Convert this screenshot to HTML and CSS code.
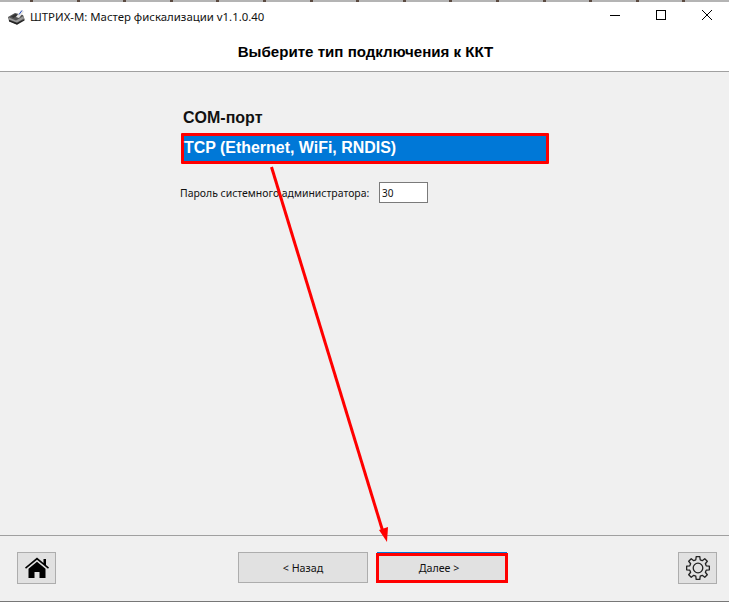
FILE: index.html
```html
<!DOCTYPE html>
<html lang="ru">
<head>
<meta charset="utf-8">
<title>ШТРИХ-М: Мастер фискализации</title>
<link rel="stylesheet" href="styles.css">
</head>
<body>
<div class="window">
  <div class="topstrip"></div>
  <header class="titlebar">
    <svg class="appicon" width="17" height="16" viewBox="0 0 17 16">
      <path d="M0 8 L7 4 L15 6 L16.500 10 L9 15.500 L1 12 Z" fill="#555"/>
      <path d="M1 8.500 L8 11.500 L15.500 7 L16 9.500 L9 13.500 L1 10.500 Z" fill="#9a9a9a"/>
      <path d="M1 11 L9 14 L16.500 10 L16.500 11.500 L9 15.800 L1 12.500 Z" fill="#222"/>
      <path d="M3 7.500 L7.500 5 L10 6 L5.500 9 Z" fill="#333"/>
      <path d="M8 8 L13 1 L16 2.500 L11 9 Z" fill="#e6e6e6"/>
      <path d="M11 5.500 L14 1.500" stroke="#2a50c0" stroke-width="1"/>
    </svg>
    <span class="apptitle">ШТРИХ-М: Мастер фискализации v1.1.0.40</span>
    <div class="winbtns">
      <svg class="winbtn" width="46" height="30" viewBox="0 0 46 30"><path d="M18 15.500H28" stroke="#000"/></svg>
      <svg class="winbtn" width="46" height="30" viewBox="0 0 46 30"><rect x="18.500" y="10.500" width="9" height="9" fill="none" stroke="#000"/></svg>
      <svg class="winbtn" width="46" height="30" viewBox="0 0 46 30"><path d="M18 10L28 20M28 10L18 20" stroke="#000"/></svg>
    </div>
  </header>
  <div class="heading">Выберите тип подключения к ККТ</div>
  <main class="content">
    <div class="panel">
      <div class="option">COM-порт</div>
      <div class="option selected">TCP (Ethernet, WiFi, RNDIS)</div>
      <div class="password">
        <label class="pwlabel" for="pw">Пароль системного администратора:</label>
        <input class="pwinput" id="pw" value="30">
      </div>
    </div>
  </main>
  <footer class="footer">
    <button class="btn iconbtn">
      <svg width="24" height="22" viewBox="0 0 24 22"><path d="M0 10.500 L12 0.500 L18.500 5.900 V2 H21 V8 L24 10.500 L23 11.800 L12 2.800 L1 11.800 Z" fill="#000"/><path d="M3.500 11.800 L12 4.800 L20.500 11.800 V21 H14.500 V15 H9.500 V21 H3.500 Z" fill="#000"/></svg>
    </button>
    <div class="navbtns">
      <button class="btn navbtn">&lt; Назад</button>
      <button class="btn navbtn next">Далее &gt;</button>
    </div>
    <button class="btn iconbtn">
      <svg width="24" height="24" viewBox="0 0 24 24" fill="none" stroke="#222" stroke-width="1.300" stroke-linejoin="round"><circle cx="12" cy="12" r="4.800"/><path d="M9.800 3.790L10.200 .64H13.800L14.200 3.790L16.250 4.640L18.760 2.700L21.300 5.240L19.360 7.750L20.210 9.800L23.360 10.200V13.800L20.210 14.200L19.360 16.250L21.300 18.760L18.760 21.300L16.250 19.360L14.200 20.210L13.800 23.360H10.200L9.800 20.210L7.750 19.360L5.240 21.300L2.700 18.760L4.640 16.250L3.790 14.200L.64 13.800V10.200L3.790 9.800L4.640 7.750L2.700 5.240L5.240 2.700L7.750 4.640Z"/></svg>
    </button>
  </footer>
  <svg class="arrow" width="729" height="602" viewBox="0 0 729 602">
    <path d="M271.500 167L383 532" stroke="#f00" stroke-width="3"/>
    <path d="M379 530L388 527L387 542Z" fill="#f00"/>
  </svg>
</div>
</body>
</html>
```
FILE: styles.css
```css
* { box-sizing: border-box; }
html, body { margin: 0; padding: 0; }
body { width: 729px; height: 602px; overflow: hidden; background: #fff; font-family: "Liberation Sans", Arial, sans-serif; }
.window { position: relative; width: 729px; height: 602px; display: flex; flex-direction: column; background: #f0f0f0; }
.topstrip { height: 2px; background: repeating-linear-gradient(90deg, #b4b4b4 0 30px, #5a4a40 30px 33px, #b4b4b4 33px 46.600px); }
.titlebar { height: 28px; display: flex; align-items: center; background: #fff; padding-left: 8px; }
.appicon { margin-right: 5px; margin-top: 1px; }
.apptitle { font-family: "Noto Sans", "Open Sans", sans-serif; font-size: 11.400px; color: #111; }
.winbtns { margin-left: auto; display: flex; margin-right: -1px; }
.winbtn { display: block; width: 46px; height: 30px; margin-top: -2px; }
.heading { height: 42px; padding-top: 13px; padding-left: 2px; background: #fff; border-bottom: 1px solid #a0a0a0; text-align: center; font-weight: 700; font-size: 15.100px; color: #000; line-height: 18px; }
.content { flex: 1; padding: 34px 0 0 181px; }
.panel { width: 368px; }
.option { height: 27px; padding-left: 2px; font-size: 16px; font-weight: 700; line-height: 24px; color: #111; }
.selected { height: 31px; background: #0078d7; border: 3px solid #f00; color: #fff; padding-left: 0; line-height: 23px; border-radius: 1px; font-size: 15.950px; }
.password { display: flex; align-items: center; margin-top: 18px; margin-left: -1px; }
.pwlabel { font-family: "Noto Sans", sans-serif; font-size: 10.450px; color: #111; width: 199px; white-space: nowrap; }
.pwinput { width: 49px; height: 21px; border: 1px solid #7a7a7a; background: #fff; padding: 0 0 0 2px; font-family: "Noto Sans", sans-serif; font-size: 10px; color: #111; }
.footer { height: 67px; border-top: 1px solid #a0a0a0; border-bottom: 1px solid #777; display: flex; align-items: flex-start; justify-content: space-between; padding: 16px 12px 0 17px; }
.btn { background: #e1e1e1; border: 1px solid #adadad; padding: 0; font-family: "Noto Sans", sans-serif; font-size: 10.700px; color: #111; display: flex; align-items: center; justify-content: center; }
.iconbtn { width: 39px; height: 32px; }
.navbtns { display: flex; gap: 9px; margin-left: 11px; }
.navbtn { width: 130px; height: 31px; }
.next { position: relative; border: 1px solid #0078d7; padding-right: 6px; }
.next::after { content: ""; position: absolute; left: -2px; right: -2px; top: 0; bottom: -1px; border: 3px solid #f00; }
.arrow { position: absolute; left: 0; top: 0; pointer-events: none; }
```
